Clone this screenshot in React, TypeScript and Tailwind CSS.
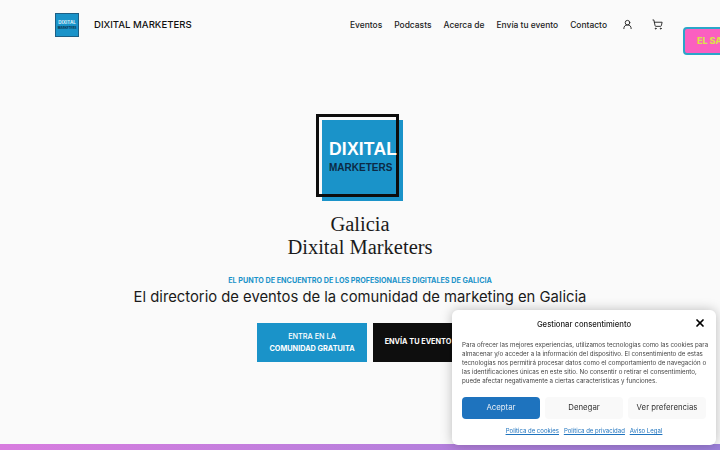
import { ShoppingCart, UserRound, X } from "lucide-react";

const navItems = ["Eventos", "Podcasts", "Acerca de", "Envía tu evento", "Contacto"];

function SmallLogo() {
  return (
    <div className="w-[24px] h-[24px] bg-[#1a93c9] border border-[#1c5f85] flex flex-col items-center justify-center">
      <span className="text-[4.5px] leading-[6px] font-bold text-[#dff1fa]">DIXITAL</span>
      <span className="text-[3px] leading-[4px] font-bold text-[#0d2c44]">MARKETERS</span>
    </div>
  );
}

function BigLogo() {
  return (
    <div className="relative w-[88px] h-[88px]">
      <div className="absolute left-[6px] top-[6px] w-[81px] h-[81px] bg-[#1a93c9]" />
      <div className="absolute left-0 top-0 w-[83px] h-[83px] border-[3px] border-[#0d0d0d]" />
      <div className="absolute left-[13px] top-[24px] flex flex-col font-['Liberation_Sans',sans-serif] font-bold">
        <span className="text-[17.5px] leading-[22px] text-white tracking-[0.2px]">DIXITAL</span>
        <span className="text-[10px] leading-[14px] mt-[1px] text-[#0c2a45]">MARKETERS</span>
      </div>
    </div>
  );
}

function CookieDialog() {
  return (
    <div className="fixed left-[452px] top-[310px] w-[264px] h-[135px] bg-white rounded-md shadow-[0_0_12px_rgba(0,0,0,0.25)] px-[10px] pt-[9px] text-[#222]">
      <div className="relative h-[11px] flex items-center justify-center">
        <span className="text-[7.7px] font-medium">Gestionar consentimiento</span>
        <X className="absolute right-0 top-[-2px] w-[12px] h-[12px] text-black" strokeWidth={3.5} />
      </div>
      <p className="mt-[10px] text-[6.2px] leading-[9px] text-[#444] whitespace-nowrap">
        Para ofrecer las mejores experiencias, utilizamos tecnologías como las cookies para
        <br />
        almacenar y/o acceder a la información del dispositivo. El consentimiento de estas
        <br />
        tecnologías nos permitirá procesar datos como el comportamiento de navegación o
        <br />
        las identificaciones únicas en este sitio. No consentir o retirar el consentimiento,
        <br />
        puede afectar negativamente a ciertas características y funciones.
      </p>
      <div className="mt-[12px] flex justify-between">
        <button className="w-[78px] h-[22px] rounded bg-[#1e73be] text-[#e6eef6] text-[7.8px]">Aceptar</button>
        <button className="w-[78px] h-[22px] rounded bg-[#f9f9f9] text-[#333] text-[7.8px]">Denegar</button>
        <button className="w-[78px] h-[22px] rounded bg-[#f9f9f9] text-[#333] text-[7.8px]">Ver preferencias</button>
      </div>
      <div className="mt-[7px] flex justify-center gap-[5px] text-[6px] text-[#1e73be] underline">
        <a>Política de cookies</a>
        <a>Política de privacidad</a>
        <a>Aviso Legal</a>
      </div>
    </div>
  );
}

export default function App() {
  return (
    <div className="relative w-[720px] h-[450px] overflow-hidden flex flex-col bg-[#fafafa] font-['Inter',sans-serif] text-[#111]">
      {/* Header */}
      <header className="flex items-center h-[50px] pl-[55px] pr-[57px]">
        <SmallLogo />
        <span className="ml-[15px] text-[9.6px] font-medium">DIXITAL MARKETERS</span>
        <nav className="ml-auto flex items-center gap-[12px] text-[8.45px] font-medium text-[#222]">
          {navItems.map((item) => (
            <a key={item}>{item}</a>
          ))}
          <UserRound className="ml-[3px] w-[11px] h-[11px]" />
          <ShoppingCart className="ml-[7px] w-[11px] h-[11px]" />
        </nav>
      </header>

      <div className="absolute left-[683px] top-[27px] w-[60px] h-[28px] rounded-[4px] border-2 border-[#2aa6c9] bg-[#fb5fc0] pl-[12px] flex items-center text-[9px] font-extrabold text-[#dbe04a] whitespace-nowrap">
        EL SALTO
      </div>

      {/* Hero */}
      <main className="flex-1 flex flex-col items-center pt-[64px]">
        <BigLogo />
        <h1 className="mt-[11px] font-['Liberation_Serif',serif] text-[20.5px] leading-[23px] text-center text-[#1b1b1b]">
          Galicia
          <br />
          Dixital Marketers
        </h1>
        <p className="mt-[17px] text-[7.2px] leading-[10px] font-bold text-[#1a93c9]">
          EL PUNTO DE ENCUENTRO DE LOS PROFESIONALES DIGITALES DE GALICIA
        </p>
        <p className="mt-[1px] text-[14.8px] leading-[20px] text-[#1a1a1a]">
          El directorio de eventos de la comunidad de marketing en Galicia
        </p>
        <div className="mt-[16px] flex gap-[6px] self-start ml-[257px]">
          <a className="w-[110px] h-[39px] bg-[#1a93c9] text-white text-[7.3px] leading-[12px] font-medium flex flex-col items-center justify-center">
            <span>ENTRA EN LA</span>
            <span className="font-bold">COMUNIDAD GRATUITA</span>
          </a>
          <a className="w-[90px] h-[39px] bg-[#0e0e0e] text-white text-[7.3px] font-bold flex items-center justify-center">
            ENVÍA TU EVENTO
          </a>
        </div>
      </main>

      {/* Franja inferior */}
      <div className="h-[6px] bg-gradient-to-r from-[#d87cdf] to-[#9c80da]" />

      <CookieDialog />
    </div>
  );
}
